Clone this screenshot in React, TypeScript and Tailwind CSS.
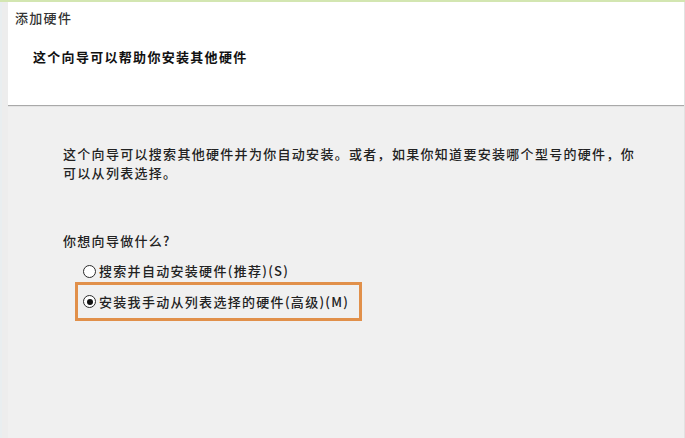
import React from "react";

function Radio({ checked }: { checked?: boolean }) {
  return (
    <span className="flex h-[13px] w-[13px] shrink-0 items-center justify-center rounded-full border border-[#2a2a2a] bg-white">
      {checked ? <span className="h-[6px] w-[6px] rounded-full bg-[#111111]" /> : null}
    </span>
  );
}

export default function App() {
  const font = {
    fontFamily: '"Noto Sans CJK SC", "Noto Sans", sans-serif',
  };
  return (
    <div
      className="flex h-[438px] w-[685px] flex-col overflow-hidden bg-[#f0f0f0] text-[13px] font-medium leading-[16px] tracking-[1.3px] text-[#222222]"
      style={font}
    >
      <div className="h-[2px] w-full shrink-0 bg-[#d3e6b1]" />
      <div className="flex flex-1">
        <div className="flex w-[8px] shrink-0">
          <div className="w-[2px] bg-[#e9eef0]" />
          <div className="flex-1 bg-[#ededed]" />
        </div>
        <div className="flex flex-1 flex-col border-r border-[#e2e2e2]">
          <div className="h-[104px] shrink-0 border-b border-[#a9a9a9] bg-white">
            <div className="pl-[7px] pt-[8px] text-[#333333]">添加硬件</div>
            <div className="pl-[25px] pt-[23px] font-bold text-[#111111]">这个向导可以帮助你安装其他硬件</div>
          </div>
          <div className="h-px shrink-0 bg-[#e4e4e4]" />
          <div className="flex flex-col pl-[55px] pt-[37px]">
            <div className="leading-[19px]">
              这个向导可以搜索其他硬件并为你自动安装。或者，如果你知道要安装哪个型号的硬件，你
              <br />
              可以从列表选择。
            </div>
            <div className="pt-[51px]">你想向导做什么?</div>
            <div className="flex items-center gap-[3px] pl-[20px] pt-[14px]">
              <Radio />
              <span>搜索并自动安装硬件(推荐)(S)</span>
            </div>
            <div className="ml-[12px] mt-[3px] flex h-[39px] w-[287px] items-center gap-[3px] border-[3px] border-[#e1904a] pl-[5px]">
              <Radio checked />
              <span>安装我手动从列表选择的硬件(高级)(M)</span>
            </div>
          </div>
        </div>
      </div>
    </div>
  );
}
